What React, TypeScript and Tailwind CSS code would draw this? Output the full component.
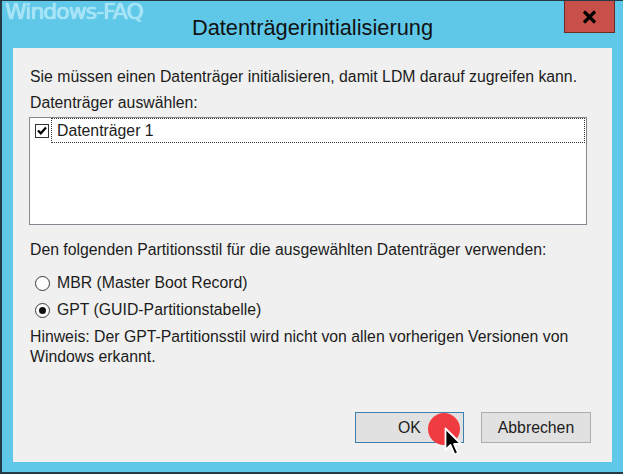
import React from "react";

const font = { fontFamily: '"Liberation Sans", Arial, sans-serif' };

function Radio({ checked }: { checked?: boolean }) {
  return (
    <span className="w-[15px] h-[15px] rounded-full border border-[#3a3a3a] bg-white flex items-center justify-center shrink-0">
      {checked && <span className="w-[7px] h-[7px] rounded-full bg-[#111]" />}
    </span>
  );
}

export default function App() {
  return (
    <div
      className="w-[623px] h-[474px] bg-[#5fc8e9] border-l-2 border-t border-b-2 border-[#243a44] flex flex-col overflow-hidden text-[#1c1c1c] relative"
      style={font}
    >
      {/* title bar */}
      <div className="h-[47px] grid grid-cols-[1fr_auto_1fr] shrink-0">
        <div
          className="pl-[3px] text-[22px] leading-[22px] tracking-[-1px] text-[#a3e4f6]"
          style={{ fontFamily: '"DejaVu Sans", sans-serif', textShadow: "0 0 1px #e6faff" }}
        >
          Windows-FAQ
        </div>
        <div className="pt-[13px] text-[21.8px] leading-[28px] text-[#111]">Datenträgerinitialisierung</div>
        <div className="flex justify-end pr-[8px]">
          <div className="w-[51px] h-[32px] bg-[#c75149] border border-[#6c2b25] border-t-0 flex items-center justify-center">
            <svg width="15" height="14" viewBox="0 0 15 14">
              <path d="M2 1.5 L13 12.5 M13 1.5 L2 12.5" stroke="#000" strokeWidth="3.2" />
            </svg>
          </div>
        </div>
      </div>

      {/* content */}
      <div className="ml-[11px] w-[599px] h-[414px] bg-[#f0f0f0] flex flex-col pl-[17px] pr-[21px] pt-[19px] pb-[19px] text-[15.8px]">
        <div className="h-[20px] leading-[20px] whitespace-nowrap">
          Sie müssen einen Datenträger initialisieren, damit LDM darauf zugreifen kann.
        </div>
        <div className="h-[20px] leading-[20px] mt-[6px]">Datenträger auswählen:</div>
        <div className="mt-[4px] ml-[-1px] w-[558px] h-[108px] bg-white border border-[#828790]">
          <div className="h-[25px] flex items-center">
            <span className="ml-[5px] w-[14px] h-[14px] border border-[#333] bg-white flex items-center justify-center shrink-0">
              <svg width="10" height="9" viewBox="0 0 10 9">
                <path d="M1 4.5 L3.8 7.3 L9 1.5" stroke="#000" strokeWidth="2.2" fill="none" />
              </svg>
            </span>
            <div className="ml-[2px] mr-[1px] flex-1 h-[25px] border border-dotted border-[#333] flex items-center pl-[5px] leading-[20px]">
              Datenträger 1
            </div>
          </div>
        </div>
        <div className="h-[20px] leading-[20px] mt-[15px] whitespace-nowrap">
          Den folgenden Partitionsstil für die ausgewählten Datenträger verwenden:
        </div>
        <div className="h-[20px] mt-[13px] flex items-center gap-[7px] pl-[5px]">
          <Radio />
          <span className="leading-[20px]">MBR (Master Boot Record)</span>
        </div>
        <div className="h-[20px] mt-[7px] flex items-center gap-[7px] pl-[5px]">
          <Radio checked />
          <span className="leading-[20px]">GPT (GUID-Partitionstabelle)</span>
        </div>
        <div className="mt-[7px] leading-[20px] whitespace-nowrap">
          Hinweis: Der GPT-Partitionsstil wird nicht von allen vorherigen Versionen von
          <br />
          Windows erkannt.
        </div>
        <div className="mt-auto flex justify-end gap-[17px]">
          <button className="relative w-[109px] h-[31px] bg-[#e1e1e1] border border-[#3c7fb1] flex items-center justify-center text-[15.8px]" style={font}>
            OK
            <span className="absolute left-[72px] top-[0px] w-[32px] h-[32px] rounded-full bg-[#f03c40]" />
            <svg className="absolute left-[88px] top-[14px]" width="21" height="32" viewBox="0 0 21 32">
              <path d="M1.5 1.5 L1.5 23 L6.5 18 L10.5 27.5 L14 26 L10 17 L17 17 Z" fill="#000" stroke="#fff" strokeWidth="1.8" strokeLinejoin="round" />
            </svg>
          </button>
          <button className="w-[110px] h-[31px] bg-[#e1e1e1] border border-[#adadad] flex items-center justify-center text-[15.8px]" style={font}>
            Abbrechen
          </button>
        </div>
      </div>
    </div>
  );
}
